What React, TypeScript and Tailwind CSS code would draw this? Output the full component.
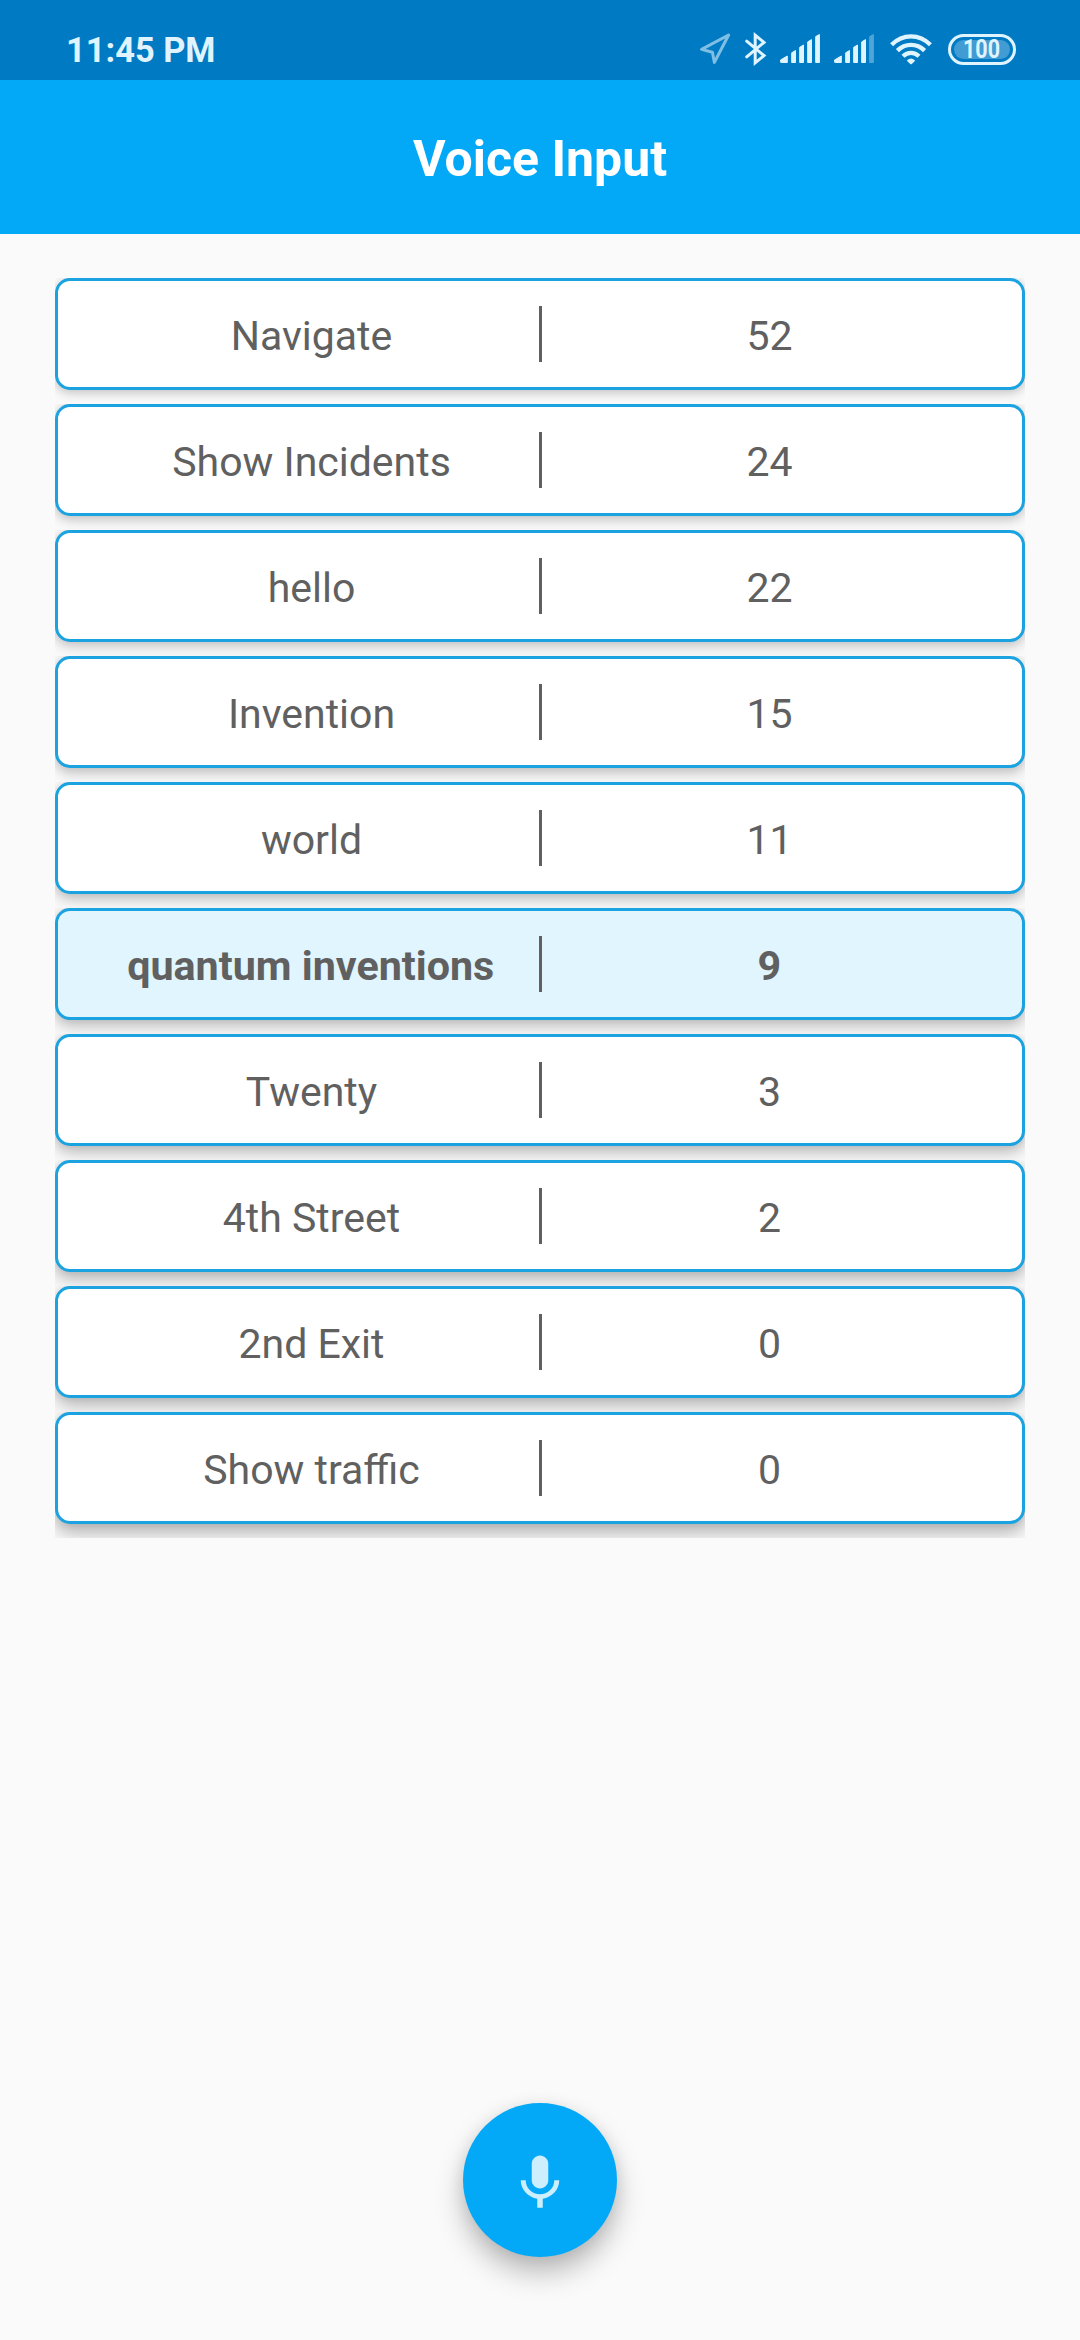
const rows = [
  { phrase: 'Navigate', count: 52 },
  { phrase: 'Show Incidents', count: 24 },
  { phrase: 'hello', count: 22 },
  { phrase: 'Invention', count: 15 },
  { phrase: 'world', count: 11 },
  { phrase: 'quantum inventions', count: 9, active: true },
  { phrase: 'Twenty', count: 3 },
  { phrase: '4th Street', count: 2 },
  { phrase: '2nd Exit', count: 0 },
  { phrase: 'Show traffic', count: 0 },
];

function LocationIcon() {
  return (
    <svg className="h-8 w-8" viewBox="0 0 32 32" fill="none" stroke="#80bfe4" strokeWidth="3" strokeLinejoin="round">
      <path d="M28.6 2 1.6 16.4 12.4 19.2 14.4 29.4Z" />
    </svg>
  );
}

function BluetoothIcon() {
  return (
    <svg className="h-[34px] w-[22px]" viewBox="0 0 22 34" fill="none" stroke="#e0f4ff" strokeWidth="3" strokeLinejoin="miter" strokeLinecap="round">
      <path d="M1.7 9.2 19 23.6 10.2 30.8V3.2L19 10.4 1.7 24.8" />
    </svg>
  );
}

function SignalIcon({ weak = false }: { weak?: boolean }) {
  return (
    <svg className="h-[30px] w-10" viewBox="0 0 40 30" fill="#e0f4ff" stroke="#e0f4ff" strokeWidth="1" strokeLinejoin="round">
      <path d="M.5 26 7.3 22V28.5H1.2Q.5 28.5.5 27.8Z" />
      <path d="M11.7 18.8 15.5 16.5V28.5H11.7Z" />
      <path d="M19.7 13.3 23.5 11V28.5H19.7Z" />
      <path d="M27.7 7.9 31.5 5.6V28.5H27.7Z" />
      <path d="M35.7 2.6 39.4.5V28.5H35.7Z" opacity={weak ? 0.35 : 1} />
    </svg>
  );
}

function WifiIcon() {
  return (
    <svg className="h-[31px] w-[42px]" viewBox="0 0 42 31" fill="none" stroke="#e0f4ff" strokeWidth="4.3">
      <path d="M1.6 10.7C12.8-.4 29.2-.4 40.4 10.7" />
      <path d="M7.4 16.6C15.2 8.9 26.8 8.9 34.6 16.6" />
      <path d="M13 22.2C17.8 17.7 24.2 17.7 29 22.2" />
      <path d="M20.2 30Q21 30.7 21.8 30L24.9 26.9Q25.1 26.4 24.6 26Q21 23 17.4 26Q16.9 26.4 17.1 26.9Z" fill="#e0f4ff" stroke="none" />
    </svg>
  );
}

function StatusBar() {
  return (
    <div className="flex h-20 items-center justify-between bg-[#007bc3] pr-16 pl-[66px] pt-[18px]">
      <span className="pt-0.5 text-[34.4px] leading-none font-bold text-[#e0f4ff]">11:45 PM</span>
      <div className="flex items-center">
        <LocationIcon />
        <div className="ml-[13px]"><BluetoothIcon /></div>
        <div className="ml-[13px]"><SignalIcon /></div>
        <div className="ml-[14px]"><SignalIcon weak /></div>
        <div className="ml-4"><WifiIcon /></div>
        <div className="ml-4 flex h-[31px] w-[68px] rounded-full border-3 border-[#e0f4ff] p-[3px]">
          <div className="flex flex-1 items-center justify-center rounded-full bg-[#409cd2]">
            <span className="origin-center scale-x-[0.86] text-[25px] leading-none font-bold text-[#e0f4ff]">100</span>
          </div>
        </div>
      </div>
    </div>
  );
}

export default function App() {
  return (
    <div className="flex h-[2340px] w-[1080px] flex-col overflow-hidden bg-[#fafafa] font-[Roboto,sans-serif]">
      <StatusBar />
      <header className="flex h-[154px] items-center justify-center bg-[#03a9f7] pt-1">
        <h1 className="text-[50px] leading-none font-bold text-white">Voice Input</h1>
      </header>
      <main className="flex flex-1 flex-col items-center justify-between px-[55px] pt-11 pb-[83px]">
        <ul className="w-full">
          {rows.map(({ phrase, count, active }, i) => (
            <li key={phrase} className="h-[126px] overflow-hidden">
              <div
                className={`flex h-28 items-center rounded-[15px] border-3 border-[#1ba2e0] px-[25px] text-[#606060] ${
                  active ? 'bg-[#e1f5fe] text-[41.25px] font-bold' : 'bg-white text-[41px]'
                }`}
                style={{ boxShadow: `0 ${4 + i * 0.5}px ${11 + i * 0.7}px rgba(0,0,0,${0.16 + i * 0.013}), 0 0 10px rgba(0,0,0,0.09)` }}
              >
                <span className={`flex-1 text-center leading-none ${active ? 'pt-1.5' : 'pt-1 pl-px'}`}>{phrase}</span>
                <span className="h-14 w-[3px] bg-[#606060]" />
                <span className={`flex-1 text-center leading-none ${active ? 'pt-1.5' : 'pt-1'}`}>{count}</span>
              </div>
            </li>
          ))}
        </ul>
        <button
          aria-label="Start voice input"
          className="flex size-[154px] items-center justify-center rounded-full bg-[#03a9f7] pt-[5px] shadow-[0_16px_28px_rgba(0,0,0,0.25),0_2px_16px_rgba(0,0,0,0.08)]"
        >
          <svg className="size-[66px]" viewBox="0 0 24 24" fill="#cdeefd">
            <path d="M12 14c1.66 0 3-1.34 3-3V5c0-1.66-1.34-3-3-3S9 3.34 9 5v6c0 1.66 1.34 3 3 3z" />
            <path d="M17.2 11c0 3-2.44 5.1-5.2 5.1S6.8 14 6.8 11H5c0 3.41 2.72 6.23 6 6.72V21h2v-3.28c3.28-.48 6-3.3 6-6.72h-1.8z" />
          </svg>
        </button>
      </main>
    </div>
  );
}
